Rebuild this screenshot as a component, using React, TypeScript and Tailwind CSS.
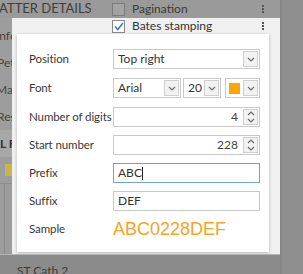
import React from 'react';

function Chevron({ up }: { up?: boolean }) {
  return (
    <svg width="8" height="5" viewBox="0 0 8 5" className="block">
      <polyline
        points={up ? '1,4 4,1 7,4' : '1,1 4,4 7,1'}
        fill="none"
        stroke="#6b6b6b"
        strokeWidth="1.2"
      />
    </svg>
  );
}

function ArrowBtn() {
  return (
    <div className="w-[15px] h-[16px] mr-[1px] border border-[#cfcfcf] bg-[#f2f2f2] flex items-center justify-center">
      <Chevron />
    </div>
  );
}

function SelectBox({ value, w, children }: { value?: string; w: string; children?: React.ReactNode }) {
  return (
    <div className={`${w} h-[20px] border border-[#c9c9c9] bg-white flex items-center justify-between`}>
      {children ?? <span className="pl-[4px] text-[12px] text-[#333]">{value}</span>}
      <ArrowBtn />
    </div>
  );
}

function Spinner({ value }: { value: string }) {
  return (
    <div className="w-[147px] h-[20px] border border-[#c9c9c9] bg-white flex items-center justify-end">
      <span className="pr-[5px] text-[12px] text-[#444]">{value}</span>
      <div className="w-[15px] h-[16px] mr-[1px] border border-[#cfcfcf] bg-[#f2f2f2] flex flex-col items-center justify-center gap-[2px]">
        <Chevron up />
        <Chevron />
      </div>
    </div>
  );
}

function Kebab({ color }: { color: string }) {
  return (
    <div className="flex flex-col gap-[1px] mr-[16px]">
      <span className={`block w-[2px] h-[2px] ${color}`} />
      <span className={`block w-[2px] h-[2px] ${color}`} />
      <span className={`block w-[2px] h-[2px] ${color}`} />
    </div>
  );
}

function Row({ label, mt, children }: { label: string; mt: string; children: React.ReactNode }) {
  return (
    <div className={`flex items-center h-[20px] ${mt}`}>
      <div className="w-[84px] text-[11.5px] tracking-[-0.1px] text-[#383838] whitespace-nowrap">{label}</div>
      {children}
    </div>
  );
}

export default function App() {
  return (
    <div className="w-[303px] h-[274px] flex overflow-hidden bg-[#8e8e8e] font-['Lato',sans-serif]">
      <div className="w-[280px] flex flex-col">
        {/* top bar */}
        <div className="h-[18px] flex bg-[#9a9a9a]">
          <div className="w-[100px] overflow-hidden flex items-center">
            <span className="ml-[-13px] text-[13px] text-[#3e3e3e] whitespace-nowrap">MATTER DETAILS</span>
          </div>
          <div className="flex-1 flex items-center">
            <span className="ml-[12px] w-[13px] h-[13px] border border-[#7c7c7c] bg-[#a3a3a3]" />
            <span className="ml-[7px] text-[12px] text-[#3a3a3a]">Pagination</span>
            <span className="flex-1" />
            <Kebab color="bg-[#555]" />
          </div>
        </div>

        <div className="h-[236px] flex">
          {/* dimmed left strip */}
          <div className="w-[12px] bg-[#9d9d9d] overflow-hidden flex flex-col text-[12px] text-[#444] whitespace-nowrap">
            <div className="h-[4px] shrink-0" />
            <div className="ml-[-4px] h-[27px] shrink-0 flex items-center">Info</div>
            <div className="ml-[-3px] h-[27px] shrink-0 flex items-center">Petit</div>
            <div className="ml-[-4px] h-[27px] shrink-0 flex items-center">Matt</div>
            <div className="ml-[-3px] h-[27px] shrink-0 flex items-center">Resp</div>
            <div className="h-[27px] shrink-0 flex items-center font-bold text-[#333] bg-[#a8a8a8]">L F</div>
            <div className="h-[27px] shrink-0 flex items-center border-b border-[#8a8a8a]">
              <span className="ml-[5px] w-[8px] h-[12px] bg-[#c9b44a]" />
            </div>
            <div className="flex-1 border-l border-[#8a8a8a] ml-[4px]" />
          </div>

          {/* frame */}
          <div className="flex-1 bg-[#f0f0f0] flex flex-col">
            <div className="h-[16px] flex items-center shrink-0">
              <span className="ml-[100px] w-[13px] h-[13px] border border-[#8a8a8a] bg-white flex items-center justify-center">
                <svg width="10" height="9" viewBox="0 0 10 9">
                  <polyline points="1,4.5 3.8,7.5 9,1" fill="none" stroke="#2b78d0" strokeWidth="1.5" />
                </svg>
              </span>
              <span className="ml-[7px] text-[12px] text-[#333]">Bates stamping</span>
              <span className="flex-1" />
              <Kebab color="bg-[#555]" />
            </div>
            <div className="ml-[5px] mr-[11px] mb-[2px] flex-1 bg-white shadow-[0_1px_3px_rgba(0,0,0,0.25)] pl-[12px] pt-[15px] flex flex-col">
              <Row label="Position" mt="mt-0">
                <SelectBox value="Top right" w="w-[147px]" />
              </Row>
              <Row label="Font" mt="mt-[9px]">
                <SelectBox value="Arial" w="w-[68px]" />
                <div className="ml-[2px]">
                  <SelectBox value="20" w="w-[38px]" />
                </div>
                <div className="ml-[4px]">
                  <SelectBox w="w-[35px]">
                    <span className="ml-[3px] w-[11px] h-[11px] bg-[#ffa500]" />
                  </SelectBox>
                </div>
              </Row>
              <Row label="Number of digits" mt="mt-[9px]">
                <Spinner value="4" />
              </Row>
              <Row label="Start number" mt="mt-[8px]">
                <Spinner value="228" />
              </Row>
              <Row label="Prefix" mt="mt-[8px]">
                <div className="w-[147px] h-[20px] border border-[#6e9fd6] bg-white flex items-center">
                  <span className="pl-[4px] text-[12px] text-[#333]">ABC</span>
                  <span className="w-[1px] h-[13px] bg-[#222]" />
                </div>
              </Row>
              <Row label="Suffix" mt="mt-[8px]">
                <div className="w-[147px] h-[20px] border border-[#c9c9c9] bg-white flex items-center">
                  <span className="pl-[4px] text-[12px] text-[#333]">DEF</span>
                </div>
              </Row>
              <Row label="Sample" mt="mt-[8px]">
                <span className="text-[18px] leading-[20px] text-[#f7a427] font-['Liberation_Sans',sans-serif]">ABC0228DEF</span>
              </Row>
            </div>
          </div>
        </div>

        {/* bottom */}
        <div className="flex-1 bg-[#8b8b8b] border-t border-[#b5b5b5] overflow-hidden flex items-end">
          <span className="ml-[17px] mb-[-6px] text-[12px] text-[#3d3d3d] whitespace-nowrap">ST Cath 2</span>
        </div>
      </div>
      <div className="flex-1 bg-[#8f8f8f] border-l-2 border-[#858585]" />
    </div>
  );
}
